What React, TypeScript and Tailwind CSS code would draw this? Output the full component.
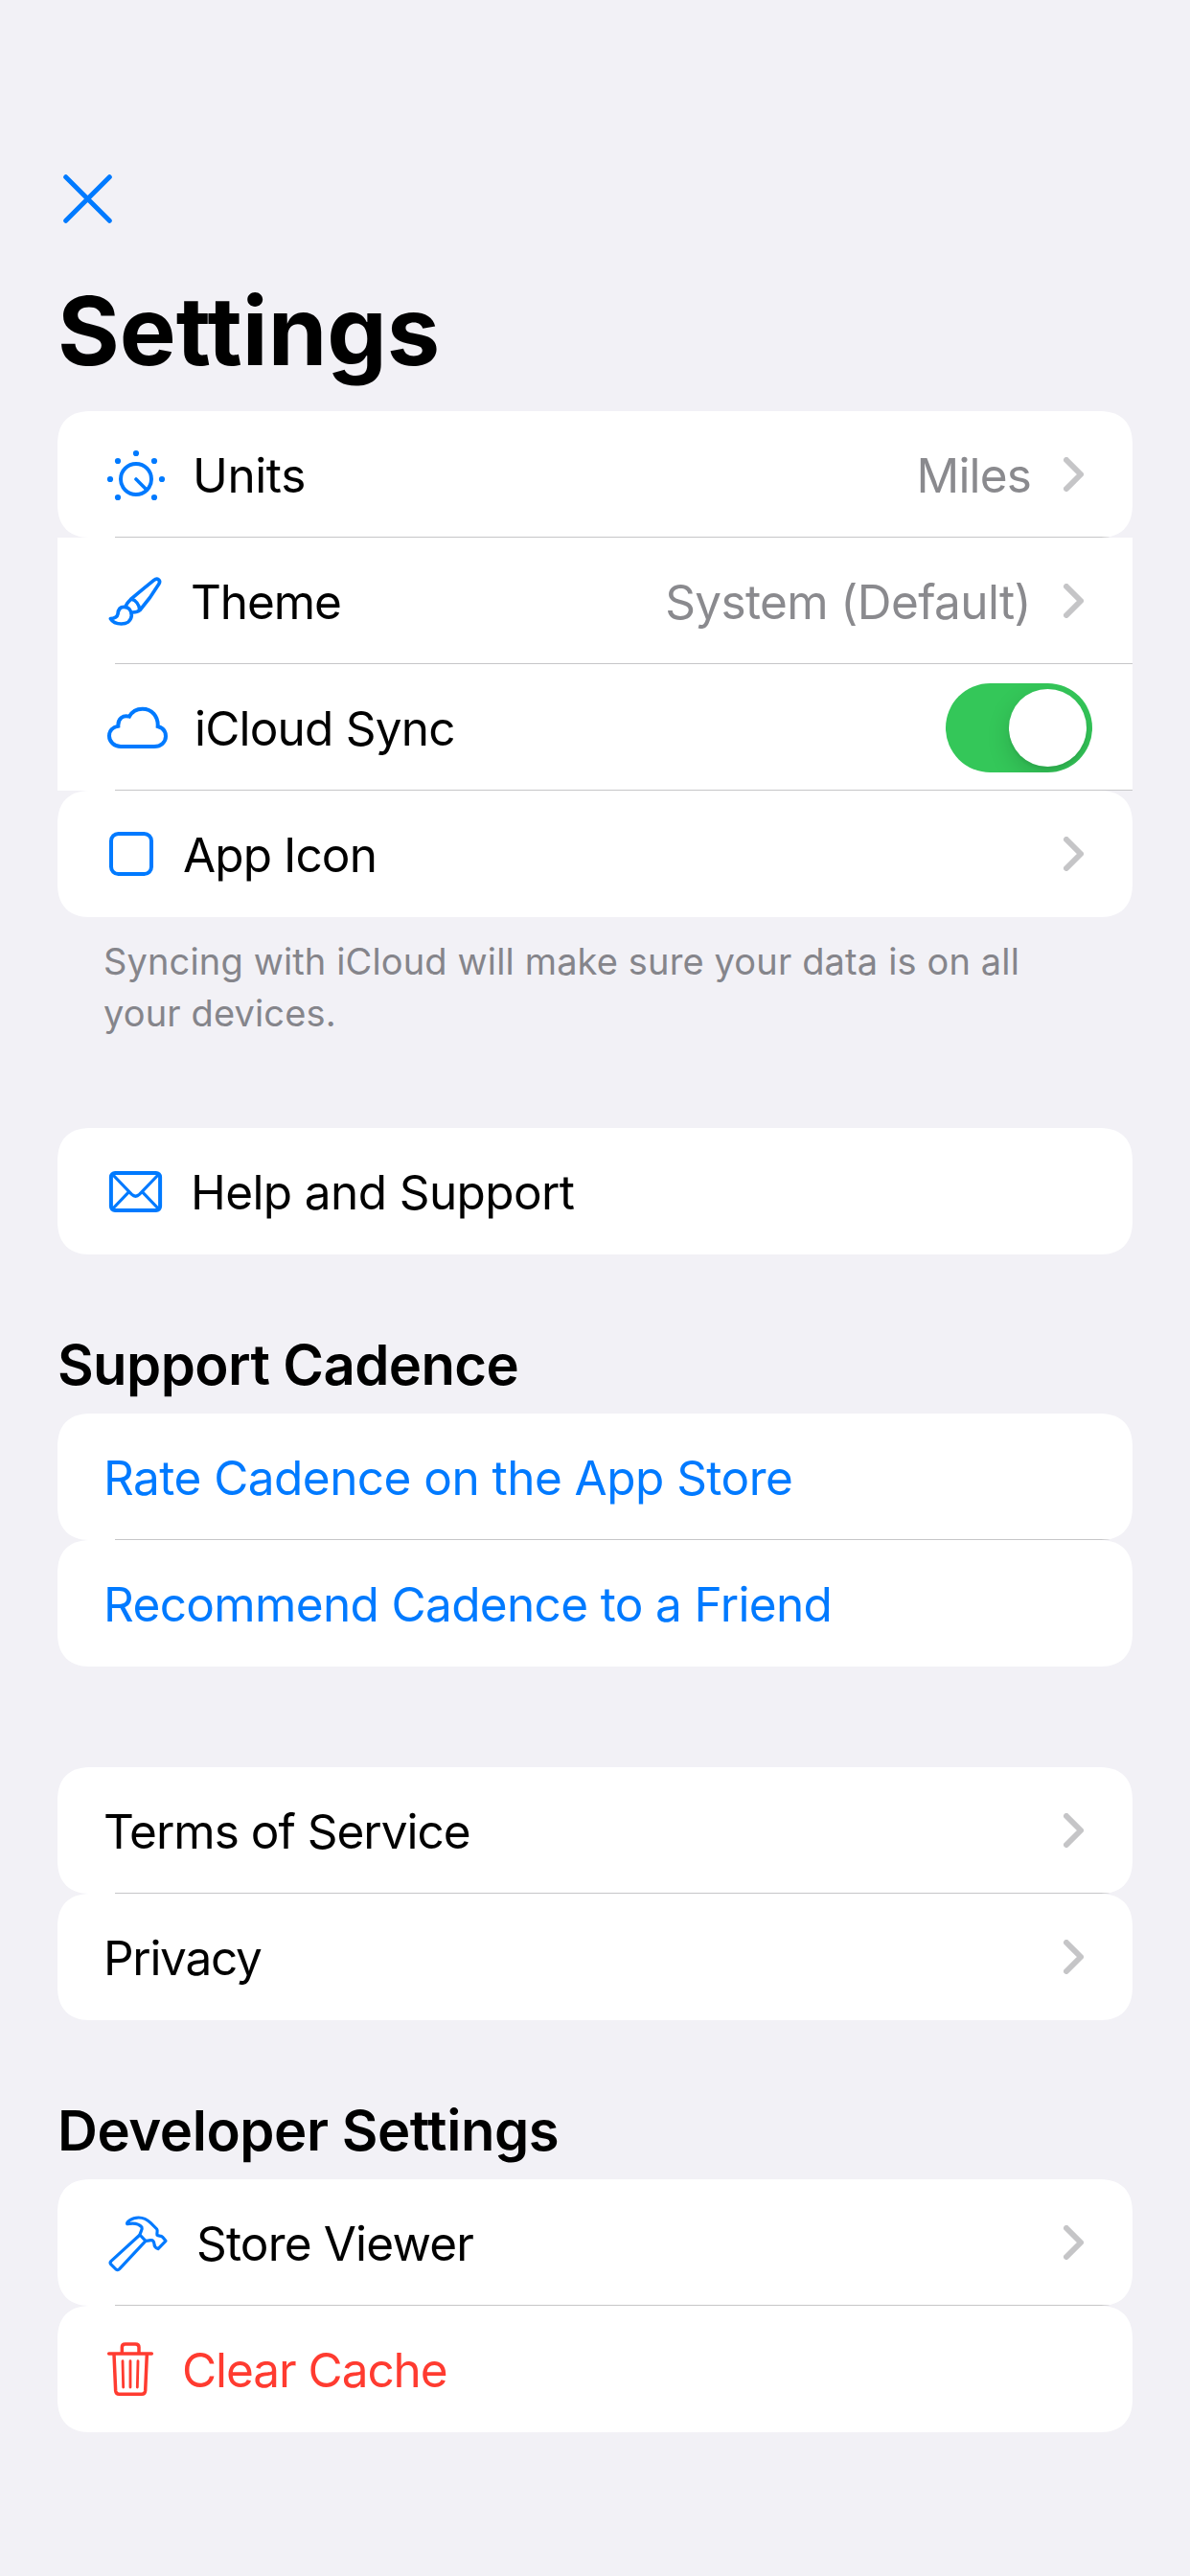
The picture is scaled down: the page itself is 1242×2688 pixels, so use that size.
import type { ReactNode } from 'react';

type Corners = 'both' | 'top' | 'bottom' | 'none';

const CORNERS: Record<Corners, string> = {
  both: 'rounded-[36px] [corner-shape:superellipse(1.3)]',
  top: 'rounded-t-[36px] [corner-shape:superellipse(1.3)]',
  bottom: 'rounded-b-[36px] [corner-shape:superellipse(1.3)]',
  none: '',
};

function UnitsIcon() {
  const dots = [[34, 44], [7, 71], [61, 71], [15, 52], [53, 52], [15, 90], [53, 90]];
  return (
    <svg className="h-[132px] w-[93px] shrink-0 text-[#007aff]" viewBox="0 0 93 132" fill="none">
      <circle cx="34" cy="71" r="16" stroke="currentColor" strokeWidth="4" />
      <path d="M34 71l11 11" stroke="currentColor" strokeWidth="3.6" strokeLinecap="round" />
      {dots.map(([x, y]) => (
        <circle key={`${x}-${y}`} cx={x} cy={y} r="3.1" fill="currentColor" />
      ))}
    </svg>
  );
}

function BrushIcon() {
  return (
    <svg className="h-[132px] w-[91px] shrink-0 text-[#007aff]" viewBox="0 0 91 132" fill="none">
      <g transform="translate(-68 -141) scale(.33333)" stroke="currentColor" strokeWidth="11" strokeLinejoin="round" strokeLinecap="round">
        <path d="M274 638C276 628 284 622 292 614C310 598 340 574 362 556C373 547 385 557 377 569C361 596 340 625 318 650C311 656 304 657 296 657" />
        <path d="M292 616C305 619 315 632 317 648" />
        <path d="M249 662C250 648 257 640 268 640C283 640 292 652 292 667C290 685 275 693 260 693C245 693 232 687 226 677C240 676 247 672 249 662Z" />
      </g>
    </svg>
  );
}

function CloudIcon() {
  return (
    <svg className="h-[132px] w-[95px] shrink-0 text-[#007aff]" viewBox="0 0 95 132" fill="none">
      <path
        transform="translate(-68 -3) scale(.33333)"
        d="M258 267H363C384 267 399 253 399 235C399 219 389 208 374 204C376 172 355 149 326 149C308 149 293 158 285 173C265 167 249 180 250 203C233 206 222 218 222 234C222 252 238 267 258 267Z"
        stroke="currentColor"
        strokeWidth="12"
      />
    </svg>
  );
}

function SquareIcon() {
  return (
    <svg className="h-[132px] w-[83px] shrink-0 text-[#007aff]" viewBox="0 0 83 132" fill="none">
      <rect x="8" y="45" width="42" height="42" rx="7.5" stroke="currentColor" strokeWidth="4" />
    </svg>
  );
}

function MailIcon() {
  return (
    <svg className="h-[132px] w-[91px] shrink-0 text-[#007aff]" viewBox="0 0 91 132" fill="none" stroke="currentColor">
      <rect x="7.9" y="47" width="51.2" height="39" rx="4.2" strokeWidth="4" />
      <path d="M9 48L29.3 69.2Q33.5 73.2 37.7 69.2L58 48M9 85L26.6 66.6M58 85L40.4 66.6" strokeWidth="3.2" />
    </svg>
  );
}

function HammerIcon() {
  return (
    <svg className="h-[132px] w-[97px] shrink-0 text-[#007aff]" viewBox="0 0 97 132" fill="none">
      <g transform="translate(-8 26) scale(.33333)" stroke="currentColor" strokeWidth="9.5" strokeLinejoin="round">
        <path d="M138 96C140 86 147 78 144 72C136 62 118 58 98 62C96 58 110 42 134 42C152 42 163 50 172 59L191 78C195 83 190 91 192 97C197 101 204 98 209 103L219 115L195 140C188 137 183 131 183 125C182 116 178 112 172 113C167 114 162 115 156 115Z" />
        <path d="M138 96L48 178Q43 183 47 188L63 204Q69 208 74 203L156 115" />
      </g>
    </svg>
  );
}

function TrashIcon() {
  return (
    <svg className="h-[132px] w-[82px] shrink-0 text-[#ff3b30]" viewBox="0 0 82 132" fill="none">
      <g transform="translate(-8 -106) scale(.33333)" stroke="currentColor" strokeLinecap="round">
        <path strokeWidth="10.5" d="M41 468H175M82 466V448Q82 438 92 438H124Q135 438 135 448V466M57 470L62 584Q63 595 73 595H144Q154 595 155 584L160 470" />
        <path strokeWidth="8.5" d="M84 491L86 573M108 491V573M132 491L130 573" />
      </g>
    </svg>
  );
}

function Chevron() {
  return (
    <svg className="mr-[51px] h-9 w-[21px] shrink-0" viewBox="0 0 21 36" fill="none">
      <path d="M3 3l15 15L3 33" stroke="#c5c5c7" strokeWidth="6" strokeLinecap="round" strokeLinejoin="round" />
    </svg>
  );
}

function Toggle() {
  return (
    <div role="switch" aria-checked="true" className="mr-[42px] flex h-[93px] w-[153px] items-center justify-end overflow-hidden rounded-full bg-[#34c759] pr-1.5">
      <div className="size-[81px] rounded-full bg-white shadow-[0_9px_24px_rgba(0,0,0,0.15),0_3px_3px_rgba(0,0,0,0.06)]" />
    </div>
  );
}

interface RowProps {
  label: string;
  labelClass: string;
  icon?: ReactNode;
  value?: string;
  valueClass?: string;
  corners?: Corners;
  separator?: boolean;
  trailing?: ReactNode;
}

function Row({ label, labelClass, icon, value, valueClass = '', corners = 'both', separator, trailing }: RowProps) {
  return (
    <div className={`h-[132px] overflow-hidden bg-white ${CORNERS[corners]}`}>
      <div className="flex h-[132px] items-center pl-12 text-[49.5px] leading-[60px] whitespace-nowrap">
        {icon}
        <span className={`pt-0.5 ${labelClass}`}>{label}</span>
        <div className="ml-auto flex items-center">
          {value && <span className={`mr-[34px] pt-0.5 text-[#8a8a8e] ${valueClass}`}>{value}</span>}
          {trailing}
        </div>
      </div>
      {separator && <div className="-mt-px ml-[60px] h-px bg-[#c6c6c8]" />}
    </div>
  );
}

export default function App() {
  return (
    <main className="flex h-[2688px] w-[1242px] flex-col bg-[#f2f1f6] px-[60px] pt-[182px] font-['Inter',sans-serif] text-black">
      <button aria-label="Close" className="ml-1.5 size-[51px]">
        <svg className="size-[51px]" viewBox="0 0 51 51" fill="none">
          <path d="M2.7 2.7l45.6 45.6M48.3 2.7L2.7 48.3" stroke="#007aff" strokeWidth="5" strokeLinecap="round" />
        </svg>
      </button>

      <h1 className="mt-[52px] mb-6 text-[99px] leading-[120px] font-bold">Settings</h1>

      <section>
        <Row icon={<UnitsIcon />} label="Units" labelClass="tracking-[-0.4px]" value="Miles" valueClass="tracking-[-0.85px]" trailing={<Chevron />} separator />
        <Row icon={<BrushIcon />} label="Theme" labelClass="tracking-[-1.1px]" value="System (Default)" valueClass="tracking-[-0.62px]" trailing={<Chevron />} corners="none" separator />
        <Row icon={<CloudIcon />} label="iCloud Sync" labelClass="tracking-[-0.8px]" trailing={<Toggle />} corners="none" separator />
        <Row icon={<SquareIcon />} label="App Icon" labelClass="tracking-[-0.9px]" trailing={<Chevron />} />
      </section>

      <p className="mt-[19px] ml-12 max-w-[1000px] text-[38px] leading-[54px] tracking-[0.14px] text-[#85858b]">
        Syncing with iCloud will make sure your data is on all your devices.
      </p>

      <section className="mt-[93px]">
        <Row icon={<MailIcon />} label="Help and Support" labelClass="tracking-[-0.6px]" />
      </section>

      <h2 className="mt-20 mb-4 text-[58px] leading-[70px] font-semibold tracking-[-0.6px]">Support Cadence</h2>
      <section>
        <Row label="Rate Cadence on the App Store" labelClass="text-[#007aff] tracking-[-0.54px]" separator />
        <Row label="Recommend Cadence to a Friend" labelClass="text-[#007aff] tracking-[-0.65px]" />
      </section>

      <section className="mt-[105px]">
        <Row label="Terms of Service" labelClass="tracking-[-1px]" trailing={<Chevron />} separator />
        <Row label="Privacy" labelClass="tracking-[-1.3px]" trailing={<Chevron />} />
      </section>

      <h2 className="mt-20 mb-4 text-[58px] leading-[70px] font-semibold tracking-[-0.43px]">Developer Settings</h2>
      <section>
        <Row icon={<HammerIcon />} label="Store Viewer" labelClass="tracking-[-0.83px]" trailing={<Chevron />} separator />
        <Row icon={<TrashIcon />} label="Clear Cache" labelClass="text-[#ff3b30] tracking-[-1.05px]" />
      </section>
    </main>
  );
}
